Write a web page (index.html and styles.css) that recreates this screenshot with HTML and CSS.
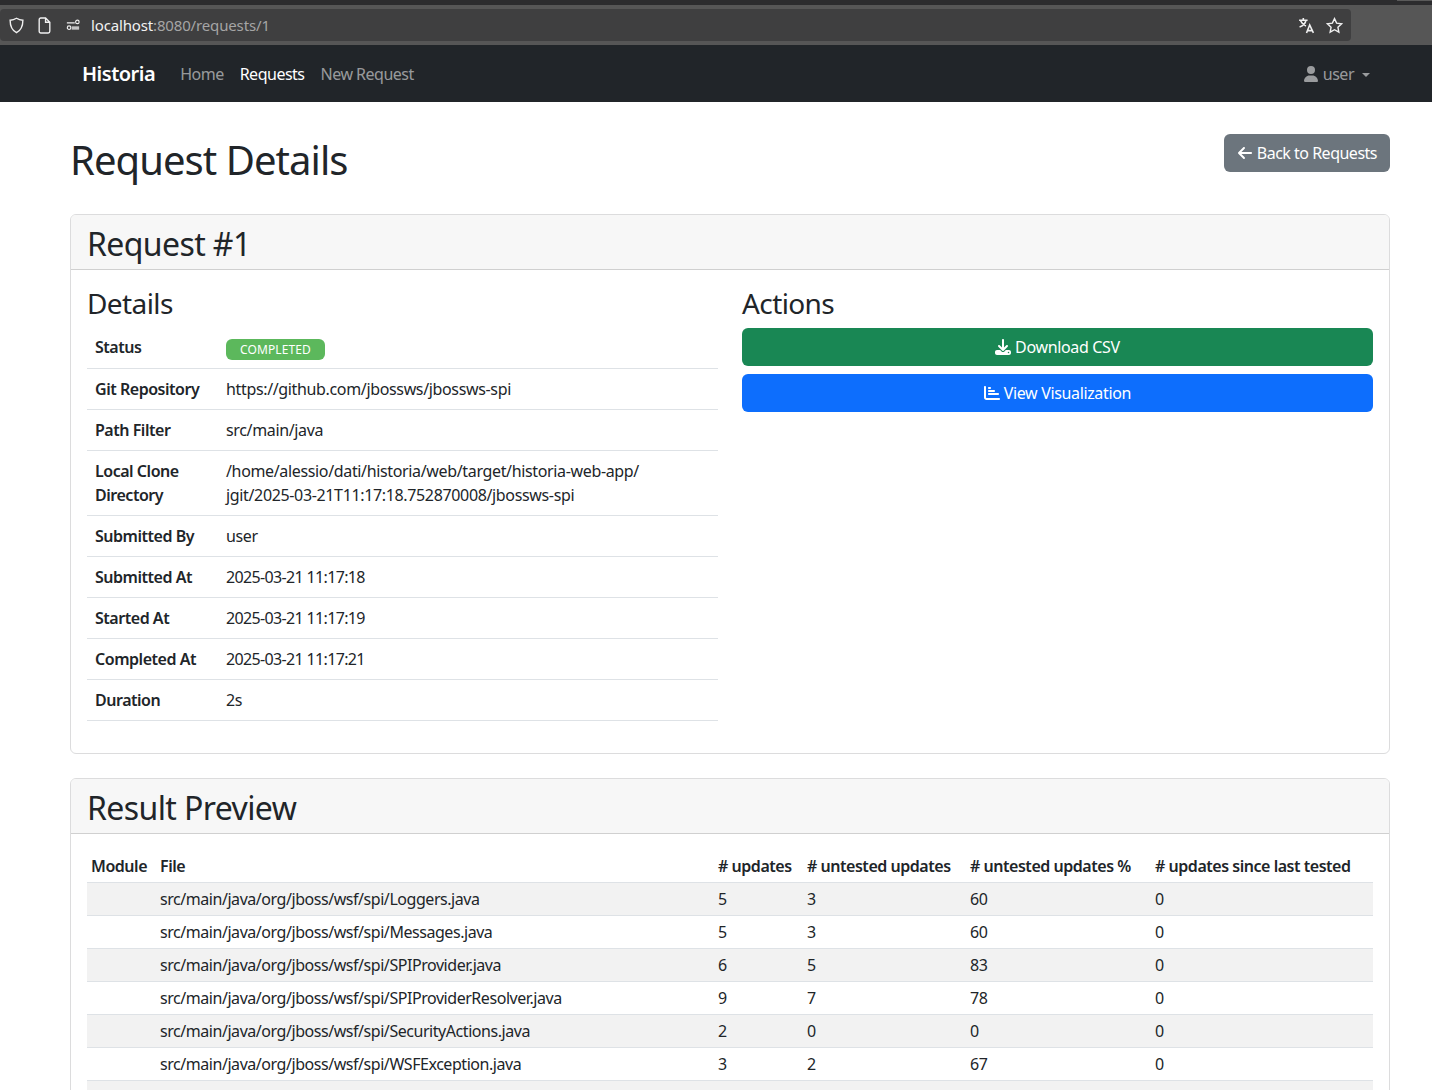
FILE: index.html
```html
<!DOCTYPE html>
<html lang="en">
<head>
    <meta charset="UTF-8">
    <meta name="viewport" content="width=device-width, initial-scale=1.0">
    <title>Request Details</title>
    <link rel="stylesheet" href="styles.css">
</head>
<body>
    <div class="browser-bar">
        <div class="url-box">
            <svg class="url-icon" viewBox="0 0 16 16"><path d="M8 1.2c2 1.2 4 1.7 6 1.8 0 5.500-1.800 9.500-6 11.800C3.800 12.500 2 8.500 2 3c2-.1 4-.6 6-1.800z"/></svg>
            <svg class="url-icon doc-icon" viewBox="0 0 16 16"><path d="M3 2.500A1.500 1.500 0 0 1 4.500 1H9l4 4v8.500a1.500 1.500 0 0 1-1.500 1.500h-7A1.500 1.500 0 0 1 3 13.500zM9 1v4h4"/></svg>
            <svg class="url-icon perm-icon" viewBox="0 0 16 16"><path d="M1 5.500h9M6.500 10.500h8.500M6.500 12.500h8.500"/><circle cx="13" cy="4.500" r="2"/><circle cx="3.500" cy="11" r="2"/></svg>
            <span class="url-text">localhost<span class="url-dim">:8080/requests/1</span></span>
            <span class="url-spacer"></span>
            <svg class="url-icon translate-icon" viewBox="0 0 16 16"><path d="M1 3h8M5 1v2M7.500 3C7 6 4.500 8.500 1.500 9.500M2.500 3.500C3.500 6 5 7.500 7.500 8.500M8 15l3-7.500 3.500 7.500M9 12.800h4.500"/></svg>
            <svg class="url-icon star-icon" viewBox="0 0 16 16"><path d="M8 1.500l2 4.300 4.700.6-3.500 3.200.9 4.700L8 12l-4.100 2.300.9-4.700L1.300 6.400 6 5.800z"/></svg>
        </div>
    </div>

    <nav class="navbar">
        <div class="navbar-inner">
            <a class="brand" href="#">Historia</a>
            <a class="nav-link" href="#">Home</a>
            <a class="nav-link active" href="#">Requests</a>
            <a class="nav-link" href="#">New Request</a>
            <a class="nav-link user-menu" href="#">
                <svg class="icon" viewBox="0 0 448 512"><path d="M224 256a128 128 0 1 0 0-256 128 128 0 1 0 0 256zm-45.700 48C79.800 304 0 383.800 0 482.300 0 498.700 13.300 512 29.700 512h388.600c16.400 0 29.700-13.300 29.700-29.700C448 383.800 368.200 304 269.700 304z"/></svg>
                user<span class="caret"></span>
            </a>
        </div>
    </nav>

    <main class="container">
        <div class="page-head">
            <h1>Request Details</h1>
            <a class="btn btn-secondary" href="#">
                <svg class="icon" viewBox="0 0 448 512"><path d="M9.400 233.400c-12.500 12.500-12.500 32.800 0 45.300l160 160c12.500 12.500 32.800 12.500 45.300 0s12.500-32.800 0-45.300L109.200 288H416c17.700 0 32-14.300 32-32s-14.300-32-32-32H109.300l105.300-105.400c12.500-12.500 12.500-32.800 0-45.300s-32.800-12.500-45.300 0l-160 160z"/></svg>
                Back to Requests
            </a>
        </div>

        <section class="card">
            <div class="card-header"><h2>Request #1</h2></div>
            <div class="card-body columns">
                <div class="col">
                    <h3>Details</h3>
                    <table class="details">
                        <tr><th>Status</th><td><span class="badge">COMPLETED</span></td></tr>
                        <tr><th>Git Repository</th><td>https://github.com/jbossws/jbossws-spi</td></tr>
                        <tr><th>Path Filter</th><td>src/main/java</td></tr>
                        <tr><th>Local Clone Directory</th><td>/home/alessio/dati/historia/web/target/historia-web-app/<br>jgit/2025-03-21T11:17:18.752870008/jbossws-spi</td></tr>
                        <tr><th>Submitted By</th><td>user</td></tr>
                        <tr><th>Submitted At</th><td class="date">2025-03-21 11:17:18</td></tr>
                        <tr><th>Started At</th><td class="date">2025-03-21 11:17:19</td></tr>
                        <tr><th>Completed At</th><td class="date">2025-03-21 11:17:21</td></tr>
                        <tr><th>Duration</th><td>2s</td></tr>
                    </table>
                </div>
                <div class="col">
                    <h3>Actions</h3>
                    <div class="actions">
                        <a class="btn btn-success" href="#">
                            <svg class="icon" viewBox="0 0 512 512"><path d="M288 32c0-17.700-14.300-32-32-32s-32 14.300-32 32v242.700l-73.400-73.400c-12.500-12.500-32.800-12.500-45.300 0s-12.500 32.800 0 45.300l128 128c12.500 12.500 32.800 12.500 45.300 0l128-128c12.500-12.500 12.500-32.800 0-45.300s-32.800-12.500-45.300 0L288 274.700zM64 352c-35.300 0-64 28.700-64 64v32c0 35.300 28.700 64 64 64h384c35.300 0 64-28.700 64-64v-32c0-35.300-28.700-64-64-64H346.500l-45.300 45.300c-25 25-65.500 25-90.500 0L165.500 352zm368 56a24 24 0 1 1 0 48 24 24 0 1 1 0-48z"/></svg>
                            Download CSV
                        </a>
                        <a class="btn btn-primary" href="#">
                            <svg class="icon" viewBox="0 0 512 512"><path d="M32 32c17.700 0 32 14.300 32 32v336c0 8.800 7.200 16 16 16h400c17.700 0 32 14.300 32 32s-14.300 32-32 32H80c-44.200 0-80-35.800-80-80V64c0-17.700 14.300-32 32-32zm96 64c0-17.700 14.300-32 32-32h32c17.700 0 32 14.300 32 32s-14.300 32-32 32h-32c-17.700 0-32-14.300-32-32zm32 64h160c17.700 0 32 14.300 32 32s-14.300 32-32 32H160c-17.700 0-32-14.300-32-32s14.300-32 32-32zm0 96h288c17.700 0 32 14.300 32 32s-14.300 32-32 32H160c-17.700 0-32-14.300-32-32s14.300-32 32-32z"/></svg>
                            View Visualization
                        </a>
                    </div>
                </div>
            </div>
        </section>

        <section class="card">
            <div class="card-header"><h2>Result Preview</h2></div>
            <div class="card-body">
                <table class="results">
                    <thead>
                        <tr><th>Module</th><th>File</th><th># updates</th><th># untested updates</th><th># untested updates %</th><th># updates since last tested</th></tr>
                    </thead>
                    <tbody>
                        <tr><td></td><td>src/main/java/org/jboss/wsf/spi/Loggers.java</td><td>5</td><td>3</td><td>60</td><td>0</td></tr>
                        <tr><td></td><td>src/main/java/org/jboss/wsf/spi/Messages.java</td><td>5</td><td>3</td><td>60</td><td>0</td></tr>
                        <tr><td></td><td>src/main/java/org/jboss/wsf/spi/SPIProvider.java</td><td>6</td><td>5</td><td>83</td><td>0</td></tr>
                        <tr><td></td><td>src/main/java/org/jboss/wsf/spi/SPIProviderResolver.java</td><td>9</td><td>7</td><td>78</td><td>0</td></tr>
                        <tr><td></td><td>src/main/java/org/jboss/wsf/spi/SecurityActions.java</td><td>2</td><td>0</td><td>0</td><td>0</td></tr>
                        <tr><td></td><td>src/main/java/org/jboss/wsf/spi/WSFException.java</td><td>3</td><td>2</td><td>67</td><td>0</td></tr>
                        <tr><td></td><td>&nbsp;</td><td></td><td></td><td></td><td></td></tr>
                    </tbody>
                </table>
            </div>
        </section>
    </main>
</body>
</html>
```

FILE: styles.css
```css
* {
    box-sizing: border-box;
}

html, body {
    height: 1090px;
    overflow: hidden;
}

body {
    font-family: 'Noto Sans', sans-serif;
    font-size: 16px;
    line-height: 24px;
    letter-spacing: -0.35px;
    color: #212529;
    background-color: #fff;
    margin: 0;
}

a {
    text-decoration: none;
}

h1, h2, h3 {
    font-weight: 400;
    margin: 0;
    line-height: 1.2;
}

h1 {
    font-size: 40px;
    letter-spacing: -0.95px;
    padding-top: 2px;
}

h2 {
    font-size: 32px;
    letter-spacing: -0.6px;
}

h3 {
    font-size: 28px;
    letter-spacing: -0.6px;
    padding-top: 1px;
    margin-bottom: 7px;
}

.icon {
    width: 1em;
    height: 1em;
    fill: currentColor;
    vertical-align: -2px;
}

/* browser toolbar */
.browser-bar {
    position: relative;
    height: 45px;
    background-color: #565656;
    border-top: 5px solid #2c2c2e;
    padding: 4px 81px 4px 0;
}

.browser-bar::after {
    content: "";
    position: absolute;
    top: -5px;
    right: 0;
    width: 35px;
    height: 1px;
    background-color: #5a5a5a;
}

.url-box {
    height: 32px;
    background-color: #3f3f40;
    border-radius: 4px;
    display: flex;
    align-items: center;
    padding: 0 8px;
    color: #f2f2f2;
    font-size: 15px;
    letter-spacing: -0.15px;
}

.url-icon {
    width: 17px;
    height: 17px;
    fill: none;
    stroke: #f0f0f0;
    stroke-width: 1.300;
    flex: none;
}

.doc-icon {
    margin-left: 11px;
}

.perm-icon {
    width: 14px;
    height: 14px;
    margin-left: 13px;
}

.url-text {
    margin-left: 11px;
}

.url-dim {
    color: #a5a5a5;
}

.url-spacer {
    flex: 1;
}

.translate-icon {
    stroke-width: 1.500;
}

.star-icon {
    margin: 0 0 0 11px;
}

/* navbar */
.navbar {
    height: 57px;
    background-color: #212529;
}

.navbar-inner {
    width: 1344px;
    height: 100%;
    margin-left: 58px;
    padding: 0 12px;
    display: flex;
    align-items: center;
}

.brand {
    color: #fff;
    font-size: 20px;
    font-weight: 600;
    letter-spacing: -0.5px;
    margin-left: 12px;
    margin-right: 17px;
}

.nav-link {
    color: rgba(255, 255, 255, 0.55);
    letter-spacing: -0.5px;
    padding: 0 8px;
}

.nav-link.active {
    color: #fff;
}

.user-menu {
    margin-left: auto;
    margin-right: 12px;
}

.caret {
    display: inline-block;
    margin-left: 8px;
    vertical-align: 3px;
    border-top: 4.800px solid;
    border-left: 4.800px solid transparent;
    border-right: 4.800px solid transparent;
}

/* page */
.container {
    width: 1344px;
    margin-left: 58px;
    padding: 32px 12px 0;
}

.page-head {
    display: flex;
    justify-content: space-between;
    align-items: flex-start;
    margin-bottom: 30px;
}

.btn {
    display: block;
    height: 38px;
    padding: 7px 13px;
    border-radius: 6px;
    color: #fff;
    text-align: center;
}

.btn-secondary {
    background-color: #6c757d;
    letter-spacing: -0.5px;
}

.btn-success {
    background-color: #198754;
}

.btn-primary {
    background-color: #0d6efd;
}

.card {
    border: 1px solid #dcdcdd;
    border-radius: 6px;
    margin-bottom: 24px;
}

.card-header {
    height: 55px;
    padding: 10px 16px 0;
    background-color: #f7f7f7;
    border-bottom: 1px solid #d0d0d0;
    border-radius: 5px 5px 0 0;
}

.card-body {
    padding: 16px;
}

.columns {
    display: flex;
    gap: 24px;
}

.col {
    flex: 1;
    min-width: 0;
}

.actions {
    display: flex;
    flex-direction: column;
    gap: 8px;
}

table {
    width: 100%;
    border-collapse: collapse;
}

th {
    font-weight: 600;
    letter-spacing: -0.47px;
    text-align: left;
}

.details {
    margin-top: -1px;
    margin-bottom: 16px;
}

.details th, .details td {
    padding: 8px;
    border-bottom: 1px solid #dee2e6;
    vertical-align: top;
}

.details th {
    width: 131px;
}

.details .date {
    letter-spacing: -0.65px;
}

.badge {
    display: inline-block;
    background-color: #5cb85c;
    color: #fff;
    font-size: 12px;
    line-height: 13px;
    letter-spacing: 0.1px;
    padding: 4px 14px;
    border-radius: 6px;
    vertical-align: -1px;
}

.results {
    table-layout: fixed;
}

.results th, .results td {
    height: 33px;
    padding: 4px;
    border-bottom: 1px solid #dee2e6;
}

.results td {
    letter-spacing: -0.45px;
}

.results th:nth-child(1) { width: 69px; }
.results th:nth-child(2) { width: 558px; }
.results th:nth-child(3) { width: 89px; }
.results th:nth-child(4) { width: 163px; }
.results th:nth-child(5) { width: 185px; }

.results tbody tr:nth-child(odd) {
    background-color: #f2f2f2;
}
```
